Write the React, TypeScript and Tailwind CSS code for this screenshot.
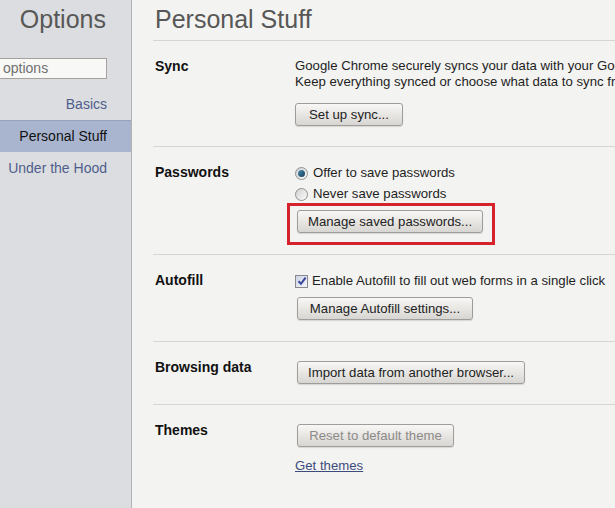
const font = { fontFamily: '"Liberation Sans", Arial, sans-serif' }

function Btn({ children, w, className = '', disabled = false }: { children: string; w: string; className?: string; disabled?: boolean }) {
  return (
    <div
      className={`${w} ${className} h-[23px] flex items-center justify-center rounded-[3px] border border-[#9e9d9b] bg-linear-to-b from-[#f8f7f5] to-[#d8d6d2] shadow-[0_1px_1px_rgba(0,0,0,0.12)] text-[13.2px] whitespace-nowrap ${disabled ? 'text-[#8c8a88]' : 'text-[#222]'}`}
    >
      {children}
    </div>
  )
}

function Radio({ checked }: { checked?: boolean }) {
  return (
    <span className="w-[13px] h-[13px] rounded-full border border-[#8f9090] bg-linear-to-br from-[#d2d2d2] to-[#fbfbfb] flex items-center justify-center">
      {checked && <span className="w-[7px] h-[7px] rounded-full bg-linear-to-br from-[#4d8db3] to-[#163f5a]" />}
    </span>
  )
}

function Checkbox() {
  return (
    <span className="w-[13px] h-[13px] border border-[#8a8a8e] bg-linear-to-br from-[#cfd3e6] to-[#f4f5fa] flex items-center justify-center">
      <svg width="10" height="10" viewBox="0 0 10 10">
        <path d="M1.5 5.2 L4 7.8 L8.6 1.6" fill="none" stroke="#36469a" strokeWidth="2" />
      </svg>
    </span>
  )
}

function Section({ label, children, pb = 'pb-[20px]' }: { label: string; children: React.ReactNode; pb?: string }) {
  return (
    <div className={`flex border-b border-[#d6d6d4] pt-[17px] ${pb}`}>
      <div className="w-[142px] pl-[2px] shrink-0 text-[14px] leading-[16px] font-bold text-[#111]">{label}</div>
      <div className="flex flex-col items-start text-[13.2px] leading-[16px] text-[#1e1e1e] whitespace-nowrap">{children}</div>
    </div>
  )
}

export default function App() {
  return (
    <div className="w-[615px] h-[508px] flex overflow-hidden bg-[#f3f3f1]" style={font}>
      <aside className="w-[132px] shrink-0 bg-[#dcdde0] border-r border-[#b3b4b7] flex flex-col">
        <h1 className="pt-[4px] pr-[25px] text-right text-[25px] leading-[30px] text-[#575757]">Options</h1>
        <div className="mt-[24px] mr-[24px] h-[21px] bg-[#f8f8f6] border-y border-r border-[#a6a39e] pl-[3px] flex items-center text-[14px] text-[#707070]">
          options
        </div>
        <nav className="mt-[9px] flex flex-col text-[14px]">
          <div className="h-[32px] flex items-center justify-end pr-[24px] text-[#4f5d8c]">Basics</div>
          <div className="h-[32px] flex items-center justify-end pr-[24px] bg-[#a9b5cf] border-t border-[#96a3bf] text-[#111]">Personal Stuff</div>
          <div className="h-[32px] flex items-center justify-end pr-[24px] text-[#4f5d8c]">Under the Hood</div>
        </nav>
      </aside>
      <main className="flex-1 pl-[21px] min-w-0">
        <h2 className="pt-[4px] pb-[6px] pl-[2px] text-[25px] leading-[30px] text-[#575757] border-b border-[#d6d6d4] whitespace-nowrap">
          Personal Stuff
        </h2>
        <Section label="Sync">
          <p>Google Chrome securely syncs your data with your Google Account.</p>
          <p>Keep everything synced or choose what data to sync from any computer.</p>
          <Btn w="w-[108px]" className="mt-[13px]">Set up sync...</Btn>
        </Section>
        <Section label="Passwords" pb="pb-[21px]">
          <label className="h-[18px] flex items-center gap-[5px]">
            <Radio checked />
            Offer to save passwords
          </label>
          <label className="mt-[3px] h-[18px] flex items-center gap-[5px]">
            <Radio />
            Never save passwords
          </label>
          <div className="relative mt-[7px] ml-[2px]">
            <Btn w="w-[186px]">Manage saved passwords...</Btn>
            <span className="absolute -left-[10px] -top-[7px] -right-[12px] -bottom-[12px] border-[3px] border-[#d4232b]" />
          </div>
        </Section>
        <Section label="Autofill" pb="pb-[21px]">
          <label className="h-[18px] flex items-center gap-[4px]">
            <Checkbox />
            Enable Autofill to fill out web forms in a single click
          </label>
          <Btn w="w-[176px]" className="mt-[7px] ml-[2px]">Manage Autofill settings...</Btn>
        </Section>
        <Section label="Browsing data">
          <Btn w="w-[228px]" className="mt-[2px] ml-[2px]">Import data from another browser...</Btn>
        </Section>
        <div className="flex pt-[17px]">
          <div className="w-[142px] pl-[2px] shrink-0 text-[14px] leading-[16px] font-bold text-[#111]">Themes</div>
          <div className="flex flex-col items-start text-[13.2px] leading-[16px]">
            <Btn w="w-[157px]" className="mt-[2px] ml-[2px]" disabled>Reset to default theme</Btn>
            <a className="mt-[11px] text-[#3c4b7c] underline">Get themes</a>
          </div>
        </div>
      </main>
    </div>
  )
}
